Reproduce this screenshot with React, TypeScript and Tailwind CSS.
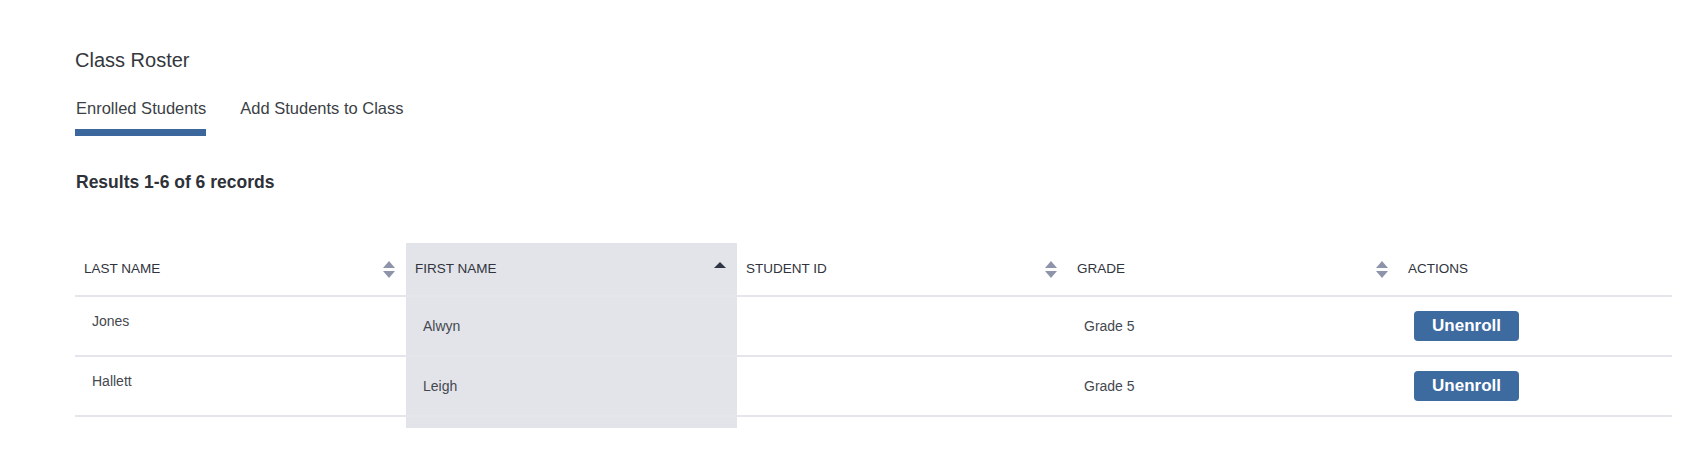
import React from "react"

type Student = { last: string; first: string; id: string; grade: string }

const students: Student[] = [
  { last: "Jones", first: "Alwyn", id: "", grade: "Grade 5" },
  { last: "Hallett", first: "Leigh", id: "", grade: "Grade 5" },
]

function SortBoth() {
  return (
    <svg width="12" height="17" viewBox="0 0 12 17" className="shrink-0">
      <path d="M6 0 L12 7 L0 7 Z" fill="#8e95aa" />
      <path d="M0 10 L12 10 L6 17 Z" fill="#8e95aa" />
    </svg>
  )
}

function SortUp() {
  return (
    <svg width="12" height="17" viewBox="0 0 12 17" className="shrink-0">
      <path d="M6 1 L12 7 L0 7 Z" fill="#2f3542" />
    </svg>
  )
}

function HeaderCell({ label, sort, active }: { label: string; sort?: "both" | "up"; active?: boolean }) {
  return (
    <div
      className={`flex h-[52px] items-center justify-between pl-[9px] pr-[11px] text-[13.5px] text-[#30343e] ${
        active ? "bg-[#e3e4e9]" : ""
      }`}
    >
      <span>{label}</span>
      {sort === "both" && <SortBoth />}
      {sort === "up" && <SortUp />}
    </div>
  )
}

export default function App() {
  return (
    <div className="min-h-screen bg-white pl-[75px] pr-[36px] pt-[46px] font-['Liberation_Sans',Arial,sans-serif]">
      {/* Title */}
      <h1 className="text-[20px] leading-[28px] text-[#34373d]">Class Roster</h1>

      {/* Tabs */}
      <div className="mt-[24px] flex gap-[34px] text-[16.5px] leading-[21px] text-[#3c3f46]">
        <div className="flex flex-col">
          <span className="pl-px">Enrolled Students</span>
          <div className="mt-[10px] h-[7px] w-[131px] bg-[#3b679c]" />
        </div>
        <span>Add Students to Class</span>
      </div>

      <p className="mt-[36px] pl-px text-[17.5px] font-bold leading-[20px] text-[#2e3138]">Results 1-6 of 6 records</p>

      {/* Table */}
      <div className="mt-[51px] grid grid-cols-[331px_331px_331px_331px_1fr]">
        <div className="col-span-5 grid grid-cols-subgrid border-b-2 border-[#e4e6eb]">
          <HeaderCell label="LAST NAME" sort="both" />
          <HeaderCell label="FIRST NAME" sort="up" active />
          <HeaderCell label="STUDENT ID" sort="both" />
          <HeaderCell label="GRADE" sort="both" />
          <HeaderCell label="ACTIONS" />
        </div>

        {students.map((s) => (
          <div
            key={s.last}
            className="col-span-5 grid h-[60px] grid-cols-subgrid border-b-2 border-[#e4e6eb] text-[14px] leading-[20px] text-[#45484f]"
          >
            <div className="pl-[17px] pt-[14px]">{s.last}</div>
            <div className="flex items-center bg-[#e3e4e9] pl-[17px]">{s.first}</div>
            <div className="flex items-center pl-[16px]">{s.id}</div>
            <div className="flex items-center pl-[16px]">{s.grade}</div>
            <div className="flex items-center pl-[15px]">
              <button className="h-[30px] w-[105px] rounded-[4px] bg-[#3d6a9f] text-[17px] font-bold text-white">
                Unenroll
              </button>
            </div>
          </div>
        ))}

        {/* column highlight runs a little past the last row */}
        <div className="col-span-5 grid h-[11px] grid-cols-subgrid">
          <div />
          <div className="bg-[#e3e4e9]" />
        </div>
      </div>
    </div>
  )
}
